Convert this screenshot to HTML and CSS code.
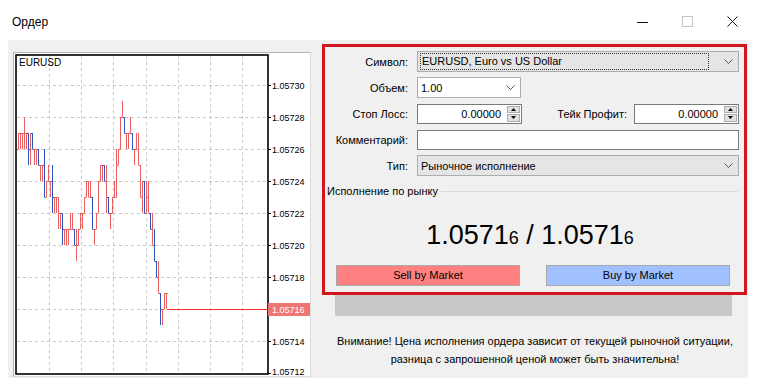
FILE: index.html
```html
<!DOCTYPE html>
<html lang="ru">
<head>
    <meta charset="UTF-8">
    <meta name="viewport" content="width=device-width, initial-scale=1.0">
    <title>Ордер</title>
    <link rel="stylesheet" href="styles.css">
</head>
<body>

<div class="window">
    <div class="titlebar">
        <span class="title">Ордер</span>
        <div class="controls">
            <span class="ctl"><svg width="11" height="11"><line x1="0" y1="6.5" x2="11" y2="6.5" stroke="#111"/></svg></span>
            <span class="ctl"><svg width="11" height="11"><rect x="0.5" y="0.5" width="10" height="10" fill="none" stroke="#c4c4c4"/></svg></span>
            <span class="ctl"><svg width="11" height="11"><path d="M0.5 0.5 L10.5 10.5 M10.5 0.5 L0.5 10.5" stroke="#111"/></svg></span>
        </div>
    </div>

    <div class="client">
        <div class="chart-panel">
            <svg id="chart" width="296" height="323">
                <g class="grid">
                    <path d="M35.5 3V321M67.5 3V321M99.5 3V321M132.5 3V321M164.5 3V321M196.5 3V321M228.5 3V321"/>
                    <path d="M3 32.5H253M3 64.5H253M3 96.5H253M3 128.5H253M3 160.5H253M3 192.5H253M3 224.5H253M3 256.5H253M3 288.5H253"/>
                </g>
                <rect class="frame" x="2" y="2" width="252" height="319"/>
                <path class="ticks" d="M254 32.5h3M254 64.5h3M254 96.5h3M254 128.5h3M254 160.5h3M254 192.5h3M254 224.5h3M254 288.5h3M254 320.5h3"/>
                <text class="sym" x="5" y="13">EURUSD</text>
                <g class="axis">
                    <text x="258" y="36">1.05730</text>
                    <text x="258" y="68">1.05728</text>
                    <text x="258" y="100">1.05726</text>
                    <text x="258" y="132">1.05724</text>
                    <text x="258" y="164">1.05722</text>
                    <text x="258" y="196">1.05720</text>
                    <text x="258" y="228">1.05718</text>
                    <text x="258" y="292">1.05714</text>
                    <text x="258" y="322">1.05712</text>
                </g>
                <path id="bars-red" class="bars-red" d=""/>
                <path id="bars-blue" class="bars-blue" d=""/>
                <rect class="last" x="153" y="256" width="101" height="1"/>
                <rect class="last-box" x="254" y="250" width="42" height="13"/>
                <text class="last-text" x="258" y="260">1.05716</text>
            </svg>
        </div>

        <div class="order">
            <div class="order-box">
                <div class="row">
                    <label>Символ:</label>
                    <div class="combo gray grow">
                        <span class="focus">EURUSD, Euro vs US Dollar</span>
                        <svg class="chev" width="9" height="5"><path d="M0.5 0.5 L4.5 4.5 L8.5 0.5"/></svg>
                    </div>
                </div>
                <div class="row">
                    <label>Объем:</label>
                    <div class="combo small">
                        <span>1.00</span>
                        <svg class="chev" width="9" height="5"><path d="M0.5 0.5 L4.5 4.5 L8.5 0.5"/></svg>
                    </div>
                </div>
                <div class="row">
                    <label>Стоп Лосс:</label>
                    <div class="spinbox">
                        <span class="num">0.00000</span>
                        <div class="spin">
                            <span><svg width="5" height="3"><path d="M0 3 L2.5 0 L5 3Z"/></svg></span>
                            <span><svg width="5" height="3"><path d="M0 0 L2.5 3 L5 0Z"/></svg></span>
                        </div>
                    </div>
                    <label class="tp">Тейк Профит:</label>
                    <div class="spinbox">
                        <span class="num">0.00000</span>
                        <div class="spin">
                            <span><svg width="5" height="3"><path d="M0 3 L2.5 0 L5 3Z"/></svg></span>
                            <span><svg width="5" height="3"><path d="M0 0 L2.5 3 L5 0Z"/></svg></span>
                        </div>
                    </div>
                </div>
                <div class="row">
                    <label>Комментарий:</label>
                    <div class="edit grow"></div>
                </div>
                <div class="row">
                    <label>Тип:</label>
                    <div class="combo gray grow">
                        <span>Рыночное исполнение</span>
                        <svg class="chev" width="9" height="5"><path d="M0.5 0.5 L4.5 4.5 L8.5 0.5"/></svg>
                    </div>
                </div>

                <div class="group-title"><span>Исполнение по рынку</span><i></i></div>

                <div class="price">1.0571<small>6</small> / 1.0571<small>6</small></div>

                <div class="buttons">
                    <div class="btn sell">Sell by Market</div>
                    <div class="btn buy">Buy by Market</div>
                </div>
            </div>

            <div class="progress"></div>

            <p class="warning">Внимание! Цена исполнения ордера зависит от текущей рыночной ситуации,<br>разница с запрошенной ценой может быть значительна!</p>
        </div>
    </div>
</div>

<script>
// tick chart, svg coords: x px, y px (16px = 1 point)
const points = [
    [3,97],[6,69],[10,87],[16,89],[20,97],[24,119],[30,127],[36,139],[40,135],
    [44,152],[48,169],[54,172],[60,182],[64,177],[68,152],[72,127],[76,147],
    [80,179],[84,132],[87,107],[91,137],[95,167],[99,152],[103,97],[107,62],
    [111,82],[118,92],[123,102],[127,137],[131,147],[135,162],[138,207],
    [142,222],[145,240],[148,252],[150,242],[153,256]
];

function priceAt(x) {
    for (let i = 1; i < points.length; i++) {
        if (x <= points[i][0]) {
            const [x0, y0] = points[i - 1];
            const [x1, y1] = points[i];
            return y0 + (y1 - y0) * (x - x0) / (x1 - x0);
        }
    }
    return points[points.length - 1][1];
}

let seed = 29;
function rnd() {
    seed = (seed * 9301 + 49297) % 233280;
    return seed / 233280;
}

const snap = y => 32 + 16 * Math.round((y - 32) / 16);

function drawBars() {
    let red = "", blue = "";
    let open = snap(priceAt(3));
    for (let x = 4; x <= 152; x += 2) {
        let close = snap(priceAt(x) + (rnd() - 0.5) * 22);
        let high = Math.min(open, close) - (rnd() < 0.25 ? 16 : 0);
        let low = Math.max(open, close) + (rnd() < 0.25 ? 16 : 0);
        if (high === low) low += 16;
        const d = `M${x + 0.5} ${high}V${low}M${x - 1} ${open + 0.5}h1.5M${x + 0.5} ${close + 0.5}h1.5`;
        if (close <= open || rnd() < 0.3) red += d; else blue += d;
        open = close;
    }
    document.getElementById("bars-red").setAttribute("d", red);
    document.getElementById("bars-blue").setAttribute("d", blue);
}

drawBars();
</script>

</body>
</html>
```

FILE: styles.css
```css
body {
    margin: 0;
    font-family: "Liberation Sans", Arial, sans-serif;
    font-size: 11px;
    color: #000;
    background: #fff;
}
.window {
    width: 760px;
    height: 390px;
}
.titlebar {
    height: 40px;
    display: flex;
    align-items: center;
    justify-content: space-between;
}
.title {
    font-size: 12px;
    padding: 3px 0 0 12px;
}
.controls {
    display: flex;
    margin-right: 5px;
    padding-top: 2px;
}
.ctl {
    width: 45px;
    height: 30px;
    display: flex;
    align-items: center;
    justify-content: center;
}
.ctl svg {
    display: block;
}

.client {
    margin: 0 12px 0 8px;
    height: 338px;
    background: #f0f0f0;
    display: flex;
    align-items: flex-start;
}
.chart-panel {
    margin: 12px 0 0 5px;
    width: 296px;
    height: 323px;
    border: 1px solid #b4b4b4;
    border-right-color: #dcdcdc;
    border-bottom-color: #dcdcdc;
    background: #fff;
}
.chart-panel svg {
    display: block;
    overflow: visible;
}
.grid path {
    fill: none;
    stroke: #c9c9c9;
    stroke-dasharray: 3 3;
}
.frame {
    fill: none;
    stroke: #000;
    stroke-width: 1.6;
}
.ticks {
    stroke: #000;
}
.sym {
    font-size: 10px;
    fill: #000;
}
.axis text {
    font-size: 9px;
    fill: #000;
}
.bars-red {
    fill: none;
    stroke: #ea5f5f;
}
.bars-blue {
    fill: none;
    stroke: #2f55c0;
}
.last {
    fill: #ff2a2a;
}
.last-box {
    fill: #f07575;
}
.last-text {
    font-size: 9px;
    fill: #fff;
}

.order {
    margin-left: 11px;
    padding-top: 4px;
    width: 426px;
}
.order-box {
    box-sizing: border-box;
    width: 425px;
    border: 3px solid #d3151d;
    padding: 4px 5px 6px 0;
}
.row {
    display: flex;
    align-items: center;
    height: 21px;
    margin-bottom: 5px;
}
.row label {
    width: 83px;
    margin-right: 9px;
    text-align: right;
    flex-shrink: 0;
}
.row label.tp {
    width: auto;
    flex: 1;
    margin-right: 7px;
}
.grow {
    flex: 1;
}
.combo {
    box-sizing: border-box;
    height: 21px;
    display: flex;
    align-items: center;
    padding-left: 3px;
    border: 1px solid #adadad;
    background: #fff;
}
.combo.gray {
    background: #e5e5e5;
}
.combo.small {
    width: 104px;
}
.chev {
    margin-left: auto;
    margin-right: 5px;
    flex-shrink: 0;
}
.chev path {
    fill: none;
    stroke: #555;
}
.focus {
    flex: 1;
    height: 15px;
    line-height: 15px;
    margin: 0 15px 0 -1px;
    border: 1px dotted #333;
    padding-left: 1px;
}
.spinbox {
    box-sizing: border-box;
    width: 105px;
    height: 20px;
    display: flex;
    border: 1px solid #7a7a7a;
    background: #fff;
}
.num {
    flex: 1;
    text-align: right;
    padding-right: 6px;
    line-height: 18px;
}
.spin {
    width: 13px;
    display: flex;
    flex-direction: column;
    padding: 1px 1px 1px 0;
    gap: 1px;
}
.spin span {
    flex: 1;
    display: flex;
    align-items: center;
    justify-content: center;
    background: #e1e1e1;
    border: 1px solid #adadad;
}
.spin svg {
    display: block;
}
.edit {
    box-sizing: border-box;
    height: 20px;
    border: 1px solid #7a7a7a;
    background: #fff;
}

.group-title {
    display: flex;
    align-items: center;
    height: 14px;
    margin-top: 8px;
    padding-left: 2px;
}
.group-title i {
    flex: 1;
    margin: 0 1px 0 3px;
    border-top: 1px solid #dadada;
}
.price {
    margin-top: 20px;
    height: 34px;
    line-height: 34px;
    text-align: center;
    font-size: 27px;
    padding-right: 4px;
}
.price small {
    font-size: 18px;
}
.buttons {
    display: flex;
    gap: 26px;
    margin-top: 13px;
    padding: 0 9px 0 11px;
}
.btn {
    flex: 1;
    height: 21px;
    line-height: 19px;
    box-sizing: border-box;
    text-align: center;
    border: 1px solid #a9a9a9;
}
.sell {
    background: #ff8080;
}
.buy {
    background: #a0c0ff;
}

.progress {
    margin: 0 16px 0 13px;
    height: 21px;
    background: #c8c8c8;
}
.warning {
    margin: 16px 0 0;
    text-align: center;
    line-height: 18px;
}
```
